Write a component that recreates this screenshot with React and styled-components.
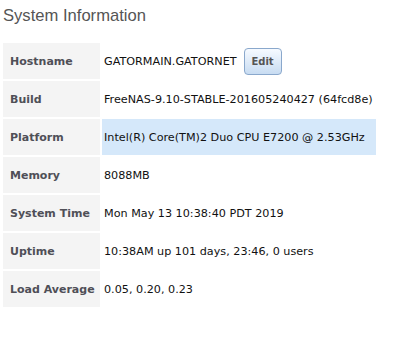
import React from 'react'
import styled, { createGlobalStyle } from 'styled-components'

const GlobalStyle = createGlobalStyle`
  body {
    margin: 0;
    background: #fff;
  }
`

const Panel = styled.div`
  padding: 6px 0 0 1px;
`

const Title = styled.h2`
  margin: 0 0 15px 2px;
  font-family: "Liberation Sans", Arial, sans-serif;
  font-weight: normal;
  font-size: 16.6px;
  line-height: 20px;
  color: #555;
`

const Table = styled.table`
  border-spacing: 2px;
  border-collapse: separate;
  table-layout: fixed;
  font-family: "DejaVu Sans", Verdana, sans-serif;
  font-size: 11px;
`

const Label = styled.th`
  width: 90px;
  height: 36px;
  padding: 0 0 0 7px;
  background: #f4f4f4;
  color: #4f4f57;
  font-weight: bold;
  text-align: left;
  vertical-align: middle;
  white-space: nowrap;
`

const Value = styled.td`
  width: 272px;
  padding: 0 0 0 2px;
  background: ${p => (p.$highlight ? '#d5e8fa' : 'transparent')};
  color: #111;
  font-size: 11.2px;
  vertical-align: middle;
  white-space: nowrap;
`

const EditButton = styled.button`
  margin-left: 7px;
  width: 38px;
  height: 27px;
  padding: 0;
  border: 1px solid #8aa8cc;
  border-radius: 4px;
  background: linear-gradient(#f6faff, #c8dcf2);
  color: #555;
  font-family: "DejaVu Sans", Verdana, sans-serif;
  font-size: 10px;
  font-weight: bold;
  vertical-align: middle;
`

const rows = [
  ['Hostname', 'GATORMAIN.GATORNET', { edit: true }],
  ['Build', 'FreeNAS-9.10-STABLE-201605240427 (64fcd8e)'],
  ['Platform', 'Intel(R) Core(TM)2 Duo CPU E7200 @ 2.53GHz', { highlight: true }],
  ['Memory', '8088MB'],
  ['System Time', 'Mon May 13 10:38:40 PDT 2019'],
  ['Uptime', '10:38AM up 101 days, 23:46, 0 users'],
  ['Load Average', '0.05, 0.20, 0.23'],
]

const App = () => (
  <>
    <GlobalStyle />
    <Panel>
      <Title>System Information</Title>
      <Table>
        <tbody>
          {rows.map(([label, value, opts = {}]) => (
            <tr key={label}>
              <Label>{label}</Label>
              <Value $highlight={opts.highlight}>
                {value}
                {opts.edit && <EditButton>Edit</EditButton>}
              </Value>
            </tr>
          ))}
        </tbody>
      </Table>
    </Panel>
  </>
)

export default App
